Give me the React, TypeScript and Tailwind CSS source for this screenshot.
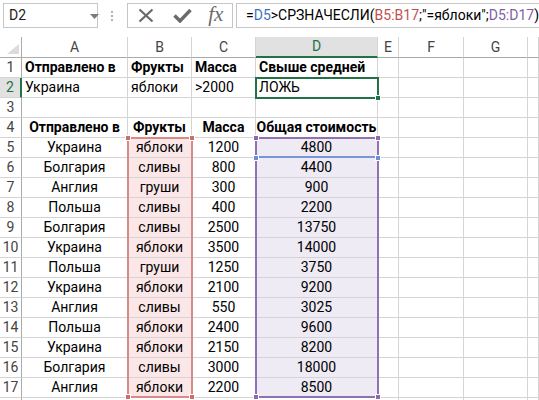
import React from "react";

const font = { fontFamily: "Roboto, 'Noto Sans', sans-serif" };

const rows: [string, string, string, string][] = [
  ["Украина", "яблоки", "1200", "4800"],
  ["Болгария", "сливы", "800", "4400"],
  ["Англия", "груши", "300", "900"],
  ["Польша", "сливы", "400", "2200"],
  ["Болгария", "сливы", "2500", "13750"],
  ["Украина", "яблоки", "3500", "14000"],
  ["Польша", "груши", "1250", "3750"],
  ["Украина", "яблоки", "2100", "9200"],
  ["Англия", "сливы", "550", "3025"],
  ["Польша", "яблоки", "2400", "9600"],
  ["Украина", "яблоки", "2150", "8200"],
  ["Болгария", "сливы", "3000", "18000"],
  ["Англия", "яблоки", "2200", "8500"],
];

const cols = ["A", "B", "C", "D", "E", "F", "G", ""];

const cell = "border-r border-b border-[#d4d4d4] h-[20px] leading-[19px] whitespace-nowrap overflow-visible";

function RowHead({ n, active }: { n?: number; active?: boolean }) {
  return (
    <div
      className={
        "h-[20px] leading-[19px] text-center text-[14px] border-b border-[#d4d4d4] " +
        (active
          ? "bg-[#e1e1e1] text-[#217346] border-r-2 border-r-[#217346]"
          : "text-[#444] border-r border-r-[#ababab]")
      }
    >
      {n}
    </div>
  );
}

function Handle({ x, y, c }: { x: number; y: number; c: string }) {
  return (
    <div
      className="absolute w-[6px] h-[6px] border border-white"
      style={{ left: x - 3, top: y - 3, background: c }}
    />
  );
}

export default function App() {
  const pink = "bg-[#fbe7e7]";
  const lav = "bg-[#eeebf5]";
  return (
    <div className="w-[539px] h-[400px] overflow-hidden bg-white text-black" style={font}>
      {/* formula bar */}
      <div className="flex items-start h-[37px] pt-[3px] pl-[3px]">
        <div className="relative w-[99px] h-[25px] border border-[#c6c6c6] flex items-center pl-[5px] text-[14px] text-[#222]">
          D2
          <svg className="absolute left-[86px] top-[10px]" width="9" height="5" viewBox="0 0 9 5">
            <path d="M0 0h9L4.5 5z" fill="#7a7a7a" />
          </svg>
        </div>
        <div className="w-[31px] h-[25px] flex flex-col items-center justify-center gap-[2px]">
          <span className="w-[2px] h-[2px] bg-[#b0b0b0]" />
          <span className="w-[2px] h-[2px] bg-[#b0b0b0]" />
          <span className="w-[2px] h-[2px] bg-[#b0b0b0]" />
        </div>
        <div className="w-[111px] h-[25px] border border-[#c6c6c6] flex items-center">
          <svg className="ml-[10px]" width="16" height="15" viewBox="0 0 16 15">
            <path d="M1.5 1.5l13 12M14.5 1.5l-13 12" stroke="#6a6a6a" strokeWidth="2.2" />
          </svg>
          <svg className="ml-[19px]" width="19" height="15" viewBox="0 0 19 15">
            <path d="M1.5 7.5l5.5 5.5L17.5 2" stroke="#6a6a6a" strokeWidth="3.4" fill="none" />
          </svg>
          <span
            className="ml-[16px] text-[21px] leading-none italic text-[#6a6a6a] -mt-[3px]"
            style={{ fontFamily: "'Liberation Serif', serif" }}
          >
            fx
          </span>
        </div>
        <div className="ml-[3px] flex-1 h-[25px] border border-[#c6c6c6] border-r-0 flex items-center pl-[9px] text-[14px] whitespace-nowrap">
          =<span className="text-[#3e6fc8]">D5</span>&gt;СРЗНАЧЕСЛИ(
          <span className="text-[#c0504d]">B5:B17</span>;"=яблоки";
          <span className="text-[#7f5fa8]">D5:D17</span>)
        </div>
      </div>

      {/* sheet */}
      <div className="relative">
        <div className="grid grid-cols-[22px_106px_64px_64px_122px_21px_65px_64px_1fr] text-[14px]">
          {/* header row */}
          <div className="h-[21px] border-r border-b border-[#ababab] relative">
            <svg className="absolute left-[7px] top-[7px]" width="12" height="10" viewBox="0 0 12 10">
              <path d="M12 0v10H0z" fill="#dcdcdc" />
            </svg>
          </div>
          {cols.map((c, i) =>
            c === "D" ? (
              <div
                key={i}
                className="h-[21px] leading-[19px] text-center bg-[#e1e1e1] text-[#217346] border-r border-r-[#d4d4d4] border-b-2 border-b-[#217346]"
              >
                {c}
              </div>
            ) : (
              <div
                key={i}
                className="h-[21px] leading-[20px] text-center text-[#444] border-r border-r-[#d4d4d4] border-b border-b-[#ababab]"
              >
                {c}
              </div>
            )
          )}

          {/* row 1 */}
          <RowHead n={1} />
          <div className={cell + " pl-[3px] font-bold"}>Отправлено в</div>
          <div className={cell + " pl-[3px] font-bold"}>Фрукты</div>
          <div className={cell + " pl-[3px] font-bold"}>Масса</div>
          <div className={cell + " pl-[3px] font-bold"}>Свыше средней</div>
          <div className={cell} />
          <div className={cell} />
          <div className={cell} />
          <div className={cell} />

          {/* row 2 */}
          <RowHead n={2} active />
          <div className={cell + " pl-[3px]"}>Украина</div>
          <div className={cell + " pl-[3px]"}>яблоки</div>
          <div className={cell + " pl-[3px]"}>&gt;2000</div>
          <div className={cell + " pl-[3px]"}>ЛОЖЬ</div>
          <div className={cell} />
          <div className={cell} />
          <div className={cell} />
          <div className={cell} />

          {/* row 3 */}
          <RowHead n={3} />
          {cols.map((_, i) => (
            <div key={i} className={cell} />
          ))}

          {/* row 4 */}
          <RowHead n={4} />
          <div className={cell + " text-center font-bold"}>Отправлено в</div>
          <div className={cell + " text-center font-bold"}>Фрукты</div>
          <div className={cell + " text-center font-bold"}>Масса</div>
          <div className={cell + " text-center font-bold"}>Общая стоимость</div>
          <div className={cell} />
          <div className={cell} />
          <div className={cell} />
          <div className={cell} />

          {rows.map((r, i) => (
            <React.Fragment key={i}>
              <RowHead n={i + 5} />
              <div className={cell + " text-center"}>{r[0]}</div>
              <div className={cell + " text-center " + pink}>{r[1]}</div>
              <div className={cell + " text-center"}>{r[2]}</div>
              <div className={cell + " text-center " + lav}>{r[3]}</div>
              <div className={cell} />
              <div className={cell} />
              <div className={cell} />
              <div className={cell} />
            </React.Fragment>
          ))}

          {/* row 18, only a sliver is visible */}
          <RowHead />
          {cols.map((_, i) => (
            <div key={i} className={cell} />
          ))}
        </div>

        {/* selection overlays */}
        <div className="absolute left-[255px] top-[40px] w-[124px] h-[22px] border-2 border-[#217346]" />
        <Handle x={378} y={61} c="#217346" />

        <div className="absolute left-[127px] top-[100px] w-[66px] h-[261px] border-2 border-[#d88a87]" />
        <Handle x={128} y={101} c="#cc6e6b" />
        <Handle x={192} y={101} c="#cc6e6b" />
        <Handle x={128} y={360} c="#cc6e6b" />
        <Handle x={192} y={360} c="#cc6e6b" />

        <div className="absolute left-[255px] top-[100px] w-[124px] h-[261px] border-2 border-[#8f72b3]" />
        <div className="absolute left-[257px] top-[119px] w-[120px] h-[2px] bg-[#7896d4]" />
        <Handle x={256} y={101} c="#8a6bb0" />
        <Handle x={378} y={101} c="#8a6bb0" />
        <Handle x={256} y={121} c="#6f8ed0" />
        <Handle x={378} y={121} c="#6f8ed0" />
        <Handle x={256} y={360} c="#8a6bb0" />
        <Handle x={378} y={360} c="#8a6bb0" />
      </div>
    </div>
  );
}
